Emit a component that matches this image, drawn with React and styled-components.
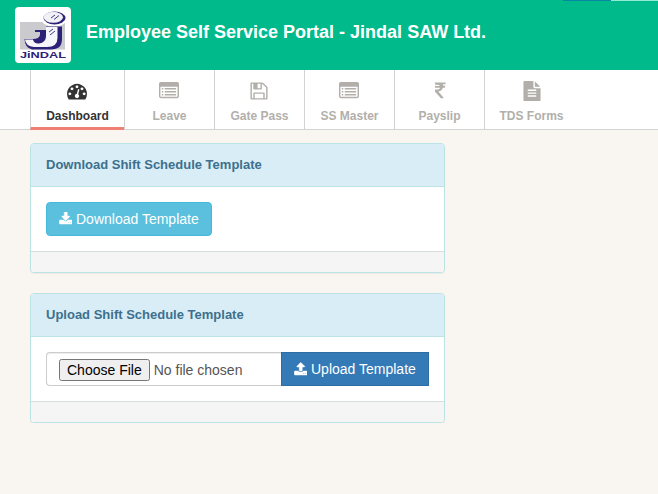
import React from "react";
import styled, { createGlobalStyle } from "styled-components";

const GlobalStyle = createGlobalStyle`
  *, *::before, *::after { box-sizing: border-box; }
  body {
    margin: 0;
    background: #f9f5f1;
    color: #333;
    font: 14px/20px "Liberation Sans", Arial, sans-serif;
    overflow: hidden;
  }
`;

const Header = styled.header`
  position: relative;
  display: flex;
  align-items: flex-start;
  height: 70px;
  padding: 7px 0 0 15px;
  background: #00ba8b;
`;

const ProgressStrip = styled.div`
  position: absolute;
  top: 0;
  right: 0;
  display: flex;
  width: 95px;
  height: 1px;
  background: #93ecd2;
  &::before {
    content: "";
    width: 48px;
    background: #0787a4;
  }
`;

const Logo = styled.div`
  width: 56px;
  height: 56px;
  border-radius: 4px;
  background: #fff;
  overflow: hidden;
  svg { display: block; }
`;

const Title = styled.h1`
  margin: 14px 0 0 15px;
  font-size: 18px;
  line-height: 22px;
  font-weight: 700;
  color: #fff;
`;

const Nav = styled.nav`
  display: flex;
  height: 60px;
  padding-left: 30px;
  background: #fff;
  border-bottom: 1px solid #d3d3d3;
`;

const Tab = styled.a`
  display: flex;
  flex-direction: column;
  align-items: center;
  width: ${(p) => p.$width}px;
  height: ${(p) => (p.$active ? 60 : 59)}px;
  padding-top: 11px;
  border-left: 1px solid #d3d3d3;
  border-bottom: ${(p) => (p.$active ? "3px solid #f07f74" : "0")};
  color: ${(p) => (p.$active ? "#333" : "#b2afaa")};
  font-size: 12px;
  line-height: 18px;
  font-weight: 700;
  white-space: nowrap;
  svg { display: block; flex: none; margin: 0 ${(p) => (p.$narrowIcon ? 0 : 1)}px 6px 0; }
`;

const Main = styled.main`
  display: flex;
  flex-direction: column;
  gap: 20px;
  width: 415px;
  margin: 13px 0 0 30px;
`;

const Panel = styled.section`
  height: 130px;
  border: 1px solid #bce3e3;
  border-radius: 4px;
  background: #fff;
  box-shadow: 0 1px 1px rgba(0, 0, 0, 0.05);
  overflow: hidden;
`;

const PanelHeading = styled.h2`
  height: 43px;
  margin: 0;
  padding: 11px 15px;
  border-bottom: 1px solid #bce3e6;
  background: #d9edf7;
  color: #3d708c;
  font-size: 13px;
  line-height: 20px;
  font-weight: 700;
`;

const PanelBody = styled.div`
  display: flex;
  height: 64px;
  padding: 15px;
`;

const PanelFooter = styled.div`
  height: 21px;
  border-top: 1px solid #d5dddd;
  background: #f5f5f5;
`;

const Button = styled.button`
  display: flex;
  align-items: center;
  gap: 4px;
  height: 34px;
  padding: 0 12px;
  border: 1px solid ${(p) => (p.$primary ? "#2e6da4" : "#46b8da")};
  border-radius: ${(p) => (p.$primary ? 0 : "4px")};
  background: ${(p) => (p.$primary ? "#337ab7" : "#5bc0de")};
  color: #fff;
  font: 14px/20px "Liberation Sans", Arial, sans-serif;
  white-space: nowrap;
  width: ${(p) => p.$width}px;
`;

const FileField = styled.input`
  flex: 1;
  min-width: 0;
  height: 34px;
  padding: 6px 12px;
  border: 1px solid #ccc;
  border-right: 0;
  border-radius: 4px 0 0 4px;
  background: #fff;
  color: #555;
  font: 14px/20px "Liberation Sans", Arial, sans-serif;
  box-shadow: inset 0 1px 1px rgba(0, 0, 0, 0.075);
`;

const paths = {
  gauge:
    "M384 1152q0-53-37.5-90.5t-90.5-37.5-90.5 37.5-37.5 90.5 37.5 90.5 90.5 37.5 90.5-37.5 37.5-90.5zm192-448q0-53-37.5-90.5t-90.5-37.5-90.5 37.5-37.5 90.5 37.5 90.5 90.5 37.5 90.5-37.5 37.5-90.5zm428 481l101-382q6-26-7.5-48.5t-38.5-29.5-48 6.5-30 39.5l-101 382q-60 5-107 43.5t-63 98.5q-20 77 20 146t117 89 146-20 89-117q16-60-6-117t-72-91zm660-33q0-53-37.5-90.5t-90.5-37.5-90.5 37.5-37.5 90.5 37.5 90.5 90.5 37.5 90.5-37.5 37.5-90.5zm-640-640q0-53-37.5-90.5t-90.5-37.5-90.5 37.5-37.5 90.5 37.5 90.5 90.5 37.5 90.5-37.5 37.5-90.5zm448 192q0-53-37.5-90.5t-90.5-37.5-90.5 37.5-37.5 90.5 37.5 90.5 90.5 37.5 90.5-37.5 37.5-90.5zm320 448q0 261-141 483-19 29-54 29h-1402q-35 0-54-29-141-221-141-483 0-182 71-348t191-286 286-191 348-71 348 71 286 191 191 286 71 348z",
  list:
    "M160 90H1632Q1792 90 1792 250V1376Q1792 1536 1632 1536H160Q0 1536 0 1376V250Q0 90 160 90ZM160 512Q128 512 128 544V1376Q128 1408 160 1408H1632Q1664 1408 1664 1376V544Q1664 512 1632 512ZM256 628H384V762H256ZM512 628H1536V762H512ZM256 896H384V1030H256ZM512 896H1536V1030H512ZM256 1164H384V1298H256ZM512 1164H1536V1298H512Z",
  save:
    "M512 1536h768v-384h-768v384zm896 0h128v-896q0-14-10-38.5t-20-34.5l-281-281q-10-10-34-20t-39-10v416q0 40-28 68t-68 28h-576q-40 0-68-28t-28-68v-416h-128v1280h128v-416q0-40 28-68t68-28h832q40 0 68 28t28 68v416zm-384-928v-320q0-13-9.5-22.5t-22.5-9.5h-192q-13 0-22.5 9.5t-9.5 22.5v320q0 13 9.5 22.5t22.5 9.5h192q13 0 22.5-9.5t9.5-22.5zm640 32v928q0 40-28 68t-68 28h-1344q-40 0-68-28t-28-68v-1344q0-40 28-68t68-28h928q40 0 88 20t76 48l280 280q28 28 48 76t20 88z",
  rupee:
    "M1345 470v102q0 14-9 23t-23 9h-168q-23 144-129 234t-276 110q167 178 459 536 14 16 4 34-8 18-29 18h-195q-16 0-25-12-306-367-498-571-9-9-9-22v-127q0-13 9.5-22.5t22.5-9.5h112q132 0 212.5-43t102.5-125h-427q-14 0-23-9t-9-23v-102q0-14 9-23t23-9h413q-57-113-268-113h-145q-13 0-22.5-9.5t-9.5-22.5v-135q0-14 9-23t23-9h884q14 0 23 9t9 23v102q0 14-9 23t-23 9h-233q47 61 64 144h171q14 0 23 9t9 23z",
  file:
    "M1596 476q14 14 28 36h-472v-472q22 14 36 28zm-476 164h544v1056q0 40-28 68t-68 28h-1344q-40 0-68-28t-28-68v-1600q0-40 28-68t68-28h800v544q0 40 28 68t68 28zm160 736v-64q0-14-9-23t-23-9h-704q-14 0-23 9t-9 23v64q0 14 9 23t23 9h704q14 0 23-9t9-23zm0-256v-64q0-14-9-23t-23-9h-704q-14 0-23 9t-9 23v64q0 14 9 23t23 9h704q14 0 23-9t9-23zm0-256v-64q0-14-9-23t-23-9h-704q-14 0-23 9t-9 23v64q0 14 9 23t23 9h704q14 0 23-9t9-23z",
  download:
    "M1344 1344q0-26-19-45t-45-19-45 19-19 45 19 45 45 19 45-19 19-45zm256 0q0-26-19-45t-45-19-45 19-19 45 19 45 45 19 45-19 19-45zm128-224v320q0 40-28 68t-68 28h-1472q-40 0-68-28t-28-68v-320q0-40 28-68t68-28h465l135 136q58 56 136 56t136-56l136-136h464q40 0 68 28t28 68zm-325-569q17 41-14 70l-448 448q-18 19-45 19t-45-19l-448-448q-31-29-14-70 17-39 59-39h256v-448q0-26 19-45t45-19h256q26 0 45 19t19 45v448h256q42 0 59 39z",
  upload:
    "M1344 1472q0-26-19-45t-45-19-45 19-19 45 19 45 45 19 45-19 19-45zm256 0q0-26-19-45t-45-19-45 19-19 45 19 45 45 19 45-19 19-45zm128-224v320q0 40-28 68t-68 28h-1472q-40 0-68-28t-28-68v-320q0-40 28-68t68-28h427q21 56 70.5 92t110.5 36h256q61 0 110.5-36t70.5-92h427q40 0 68 28t28 68zm-325-648q-17 40-59 40h-256v448q0 26-19 45t-45 19h-256q-26 0-45-19t-19-45v-448h-256q-42 0-59-40-17-39 14-69l448-448q18-19 45-19t45 19l448 448q31 30 14 69z",
};

function Icon({ name, size = 20, viewBox = "0 0 1792 1792", width = size, bold = 0 }) {
  return (
    <svg width={width} height={size} viewBox={viewBox} fill="currentColor" fillRule="evenodd" stroke="currentColor" strokeWidth={bold} aria-hidden="true">
      <path d={paths[name]} />
    </svg>
  );
}

function JindalLogo() {
  return (
    <svg width="56" height="56" viewBox="0 0 56 56" role="img" aria-label="Jindal">
      <rect x="5" y="15" width="45" height="27.5" fill="#cbcbcf" />
      <ellipse cx="39" cy="11.5" rx="12.5" ry="8.5" fill="#fff" />
      <path d="M20 23H31V19.5H47V32Q47 42.5 36 42.5H17Q10 41 9.5 32H18Q24 32 25 28V25H20Z" fill="#2b2177" />
      <path d="M31 20H42.5V31Q42.5 40 32 40H19Q10.5 39 10 32.5H18Q19 37 24 36.5Q31 35.5 31 29Z" fill="#f6f6fa" />
      <ellipse cx="39.5" cy="11" rx="11" ry="6.5" fill="#2b2177" />
      <ellipse cx="38.3" cy="10.3" rx="9.7" ry="5.5" fill="#f1f1f5" />
      <path d="M36 11L40 8M39 12.5L44 8.5M34 25L38 22M35 28L40 24" stroke="#2b2177" strokeWidth="0.9" />
      <text x="5" y="51.2" textLength="46" lengthAdjust="spacingAndGlyphs" fill="#2b2177" fontFamily="Liberation Sans" fontSize="9" fontWeight="700">JiNDAL</text>
    </svg>
  );
}

const tabs = [
  { label: "Dashboard", icon: "gauge", width: 94, active: true },
  { label: "Leave", icon: "list", width: 90 },
  { label: "Gate Pass", icon: "save", width: 90 },
  { label: "SS Master", icon: "list", width: 90 },
  { label: "Payslip", icon: "rupee", width: 90, narrowIcon: true },
  { label: "TDS Forms", icon: "file", width: 94, narrowIcon: true },
];

export default function App() {
  return (
    <>
      <GlobalStyle />
      <Header>
        <Logo><JindalLogo /></Logo>
        <Title>Employee Self Service Portal - Jindal SAW Ltd.</Title>
        <ProgressStrip />
      </Header>
      <Nav>
        {tabs.map((t) => (
          <Tab key={t.label} $active={t.active} $width={t.width} $narrowIcon={t.narrowIcon}>
            <Icon name={t.icon} />
            {t.label}
          </Tab>
        ))}
      </Nav>
      <Main>
        <Panel>
          <PanelHeading>Download Shift Schedule Template</PanelHeading>
          <PanelBody>
            <Button $width={166}>
              <Icon name="download" size={14} width={13} viewBox="32 0 1664 1792" bold={60} />
              Download Template
            </Button>
          </PanelBody>
          <PanelFooter />
        </Panel>
        <Panel>
          <PanelHeading>Upload Shift Schedule Template</PanelHeading>
          <PanelBody>
            <FileField type="file" aria-label="Shift schedule file" />
            <Button $primary $width={148}>
              <Icon name="upload" size={14} width={13} viewBox="32 0 1664 1792" bold={60} />
              Upload Template
            </Button>
          </PanelBody>
          <PanelFooter />
        </Panel>
      </Main>
    </>
  );
}
